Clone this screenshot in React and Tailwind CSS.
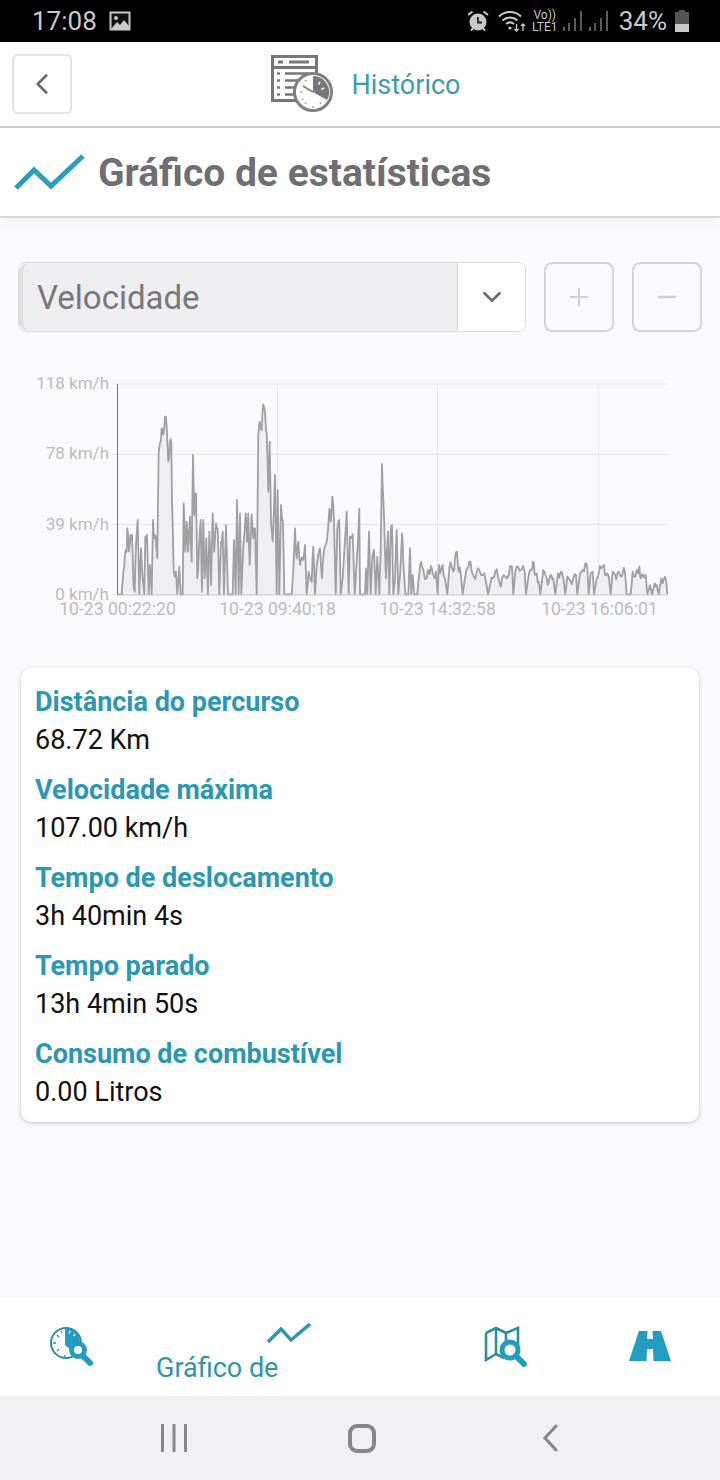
import React from "react";
import { ChevronLeft, ChevronDown, Plus, Minus } from "lucide-react";

const font = { fontFamily: "Roboto, sans-serif" };

// speed trace, read off the picture: x, y in crop pixels (3x)
const LEFT = [
  352,688,365,688,370,620,375,565,380,560,382,490,387,560,392,510,396,510,400,650,404,680,408,540,413,465,418,688,423,550,428,640,433,688,436,515,441,510,446,688,450,600,455,688,459,465,463,520,467,515,472,580,476,260,480,235,485,190,490,210,495,155,500,185,505,290,510,230,514,230,516,420,518,480,521,620,528,620,532,688,538,605,542,688,548,688,551,415,556,560,560,470,564,560,570,455,575,590,579,270,583,450,588,385,592,640,597,550,602,465,606,680,610,465,614,640,619,520,624,688,628,500,633,660,638,445,643,560,648,475,653,490,658,688,663,530,668,500,672,688,678,480,684,688,698,688,702,525,707,688,711,405,716,688,720,445,724,688,730,545,737,445,741,530,745,445,749,600,755,448,760,520,765,490,770,688,775,210,779,170,785,195,790,118,795,140,800,205,805,380,809,230,813,470,818,530,825,330,830,688,833,375,838,688,843,420,849,470,853,688,875,688,880,615,885,490,890,580,895,530,900,600,910,585,915,540,920,688,926,620,935,650,940,545,945,688,950,600,960,550,966,640,972,555,980,530,988,432,992,470,997,395,1002,470,1007,688,1012,490,1018,465,1022,688,1028,640,1040,440,1046,688,1050,515,1058,508,1064,688,1070,590,1078,432,1080,688,
];
const RIGHT = [
  5,688,15,688,18,610,22,688,27,500,32,688,37,575,42,555,47,688,52,575,58,688,62,560,66,297,70,400,75,560,78,640,84,500,88,688,92,500,96,480,100,688,105,640,110,495,115,688,120,630,126,505,130,590,136,688,145,688,150,550,154,688,158,630,163,688,172,688,176,640,180,605,186,605,190,615,200,640,205,615,210,625,215,610,220,630,228,620,233,688,236,605,240,625,248,600,255,640,262,688,268,610,275,605,280,620,285,580,291,560,296,620,302,625,308,688,315,640,322,610,328,590,335,620,342,635,350,620,358,615,368,630,378,650,384,688,392,650,398,640,406,620,414,635,420,660,426,640,436,635,446,630,456,605,460,688,466,620,474,605,484,615,494,620,498,688,506,630,514,615,519,590,524,630,530,625,536,650,541,688,547,640,553,620,560,640,566,650,574,630,580,640,586,688,594,625,602,620,610,640,616,688,622,635,630,645,640,640,648,630,652,688,660,625,668,615,676,595,682,610,686,688,692,625,698,620,702,688,710,640,716,625,724,610,732,600,738,630,746,635,752,688,758,620,766,630,772,625,780,630,788,625,795,622,800,688,812,688,818,620,826,635,834,625,838,605,844,640,850,630,857,630,862,688,870,660,876,688,884,655,890,660,896,688,904,640,912,640,918,645,922,688,
];

function tracePoints() {
  const raw = [];
  for (let i = 0; i < LEFT.length; i += 2) raw.push([LEFT[i] / 3, 365 + LEFT[i + 1] / 3]);
  for (let i = 0; i < RIGHT.length; i += 2) raw.push([360 + RIGHT[i] / 3, 365 + RIGHT[i + 1] / 3]);
  const out = [];
  raw.forEach((p, i) => {
    out.push(p);
    const next = raw[i + 1];
    // the real series is denser than what can be read by eye: add a jagged in-between sample
    if (next && p[1] < 594 && next[1] < 594) {
      const jitter = ((i * 7) % 5) - 2;
      out.push([(p[0] + next[0]) / 2, Math.min(594, (p[1] + next[1]) / 2 + jitter * 2.5)]);
    }
  });
  return out.map((p) => `${p[0].toFixed(1)},${p[1].toFixed(1)}`).join(" ");
}

const STATS = [
  ["Distância do percurso", "68.72 Km"],
  ["Velocidade máxima", "107.00 km/h"],
  ["Tempo de deslocamento", "3h 40min 4s"],
  ["Tempo parado", "13h 4min 50s"],
  ["Consumo de combustível", "0.00 Litros"],
];

function StatusBar() {
  return (
    <div className="h-[42px] bg-black flex items-center pl-[32px] pr-[31px] text-[#c9c9c9] shrink-0">
      <span className="text-[26px] leading-none">17:08</span>
      <svg width="22" height="20" viewBox="0 0 22 20" className="ml-[12px]">
        <rect x="0.5" y="0.5" width="21" height="19" fill="#c9c9c9" />
        <rect x="2.5" y="2.5" width="17" height="15" fill="#111" />
        <circle cx="7" cy="7" r="2" fill="#c9c9c9" />
        <path d="M2 18 L8 11 L11 14 L15 9 L20 15 V18 Z" fill="#c9c9c9" />
      </svg>
      <div className="flex-1" />
      {/* alarm */}
      <svg width="24" height="24" viewBox="0 0 24 24">
        <circle cx="12" cy="13" r="8.5" fill="#c9c9c9" />
        <path d="M12 8 V13.5 H16" stroke="#222" strokeWidth="1.8" fill="none" />
        <path d="M2 6 L6.5 2.5 M22 6 L17.5 2.5 M5 21.5 L7 19.5 M19 21.5 L17 19.5" stroke="#c9c9c9" strokeWidth="2" />
      </svg>
      {/* wifi */}
      <svg width="28" height="24" viewBox="0 0 28 24" className="ml-[8px]" fill="none" stroke="#c9c9c9">
        <path d="M1 7.5 C7 1.5 17 1.5 23 7.5" strokeWidth="2" />
        <path d="M4.5 11.5 C9 7.5 15 7.5 19.5 11.5" strokeWidth="2" />
        <path d="M8 15 C10.5 13 13.5 13 16 15" strokeWidth="2" />
        <circle cx="12" cy="19" r="1.6" fill="#c9c9c9" stroke="none" />
        <path d="M18.5 15 V22 M16.5 20 L18.5 22 L20.5 20 M25 22 V15 M23 17 L25 15 L27 17" strokeWidth="1.4" />
      </svg>
      <div className="ml-[6px] w-[26px] flex flex-col items-center text-[#c9c9c9] leading-none">
        <span className="text-[12px] leading-[12px]">Vo))</span>
        <span className="text-[12px] leading-[12px]">LTE1</span>
      </div>
      <svg width="46" height="22" viewBox="0 0 46 22" className="ml-[4px]" fill="#5c5c5c">
        <rect x="1" y="17" width="2" height="4" />
        <rect x="6" y="13" width="2" height="8" />
        <rect x="12" y="8" width="2" height="13" />
        <rect x="18" y="1" width="2" height="20" />
        <rect x="27" y="17" width="2" height="4" />
        <rect x="32" y="13" width="2" height="8" />
        <rect x="38" y="8" width="2" height="13" />
        <rect x="44" y="1" width="2" height="20" />
      </svg>
      <span className="ml-[11px] text-[26px] leading-none">34%</span>
      <svg width="14" height="22" viewBox="0 0 14 22" className="ml-[8px]">
        <rect x="4" y="0" width="6" height="2" fill="#555" />
        <rect x="0" y="2" width="14" height="20" fill="#555" />
        <rect x="0" y="14" width="14" height="8" fill="#c9c9c9" />
      </svg>
    </div>
  );
}

function HistoryIcon() {
  return (
    <svg width="62" height="58" viewBox="0 0 62 58">
      <rect x="1.5" y="1.5" width="44" height="44" fill="#fff" stroke="#77777b" strokeWidth="3" />
      <rect x="1.5" y="1.5" width="44" height="11" fill="#fff" stroke="#77777b" strokeWidth="3" />
      <path d="M7 7 H12 M18 7 H38" stroke="#77777b" strokeWidth="3" />
      <path d="M6 18.5 H9 M14 18.5 H38 M6 25.5 H9 M14 25.5 H34 M6 32.5 H9 M14 32.5 H30 M6 39.5 H9 M14 39.5 H26" stroke="#77777b" strokeWidth="2.6" />
      <circle cx="42" cy="37" r="18.5" fill="#fff" stroke="#808084" strokeWidth="3" />
      <path d="M42 21 A16 16 0 0 1 56 45 L42 37 Z" fill="#77777b" />
      <path d="M49 27 L47.5 29.5 M53 33 L50.5 34.5" stroke="#fff" strokeWidth="1.5" />
      <path d="M42 37 L32 31" stroke="#808084" strokeWidth="2" />
      <path d="M29 37 H31 M42 51 V53 M34 49 L35 47.5 M50 49 L49 47.5 M31 45 L32.5 44 M34 25 L35 26.5" stroke="#a0a0a2" strokeWidth="1.5" />
    </svg>
  );
}

function SpeedChart() {
  const points = tracePoints();
  return (
    <svg width="720" height="262" viewBox="0 365 720 262" className="block">
      {[384, 454.5, 524.5, 594.5].map((y) => (
        <line key={y} x1="112" x2="668" y1={y} y2={y} stroke="#e8e8ea" strokeWidth="1" />
      ))}
      {[277.5, 437.5, 598.5].map((x) => (
        <line key={x} x1={x} x2={x} y1="384" y2="595" stroke="#e6e6e8" strokeWidth="1" />
      ))}
      <polygon points={`117,595 ${points} 668,595`} fill="#efeff1" />
      <polyline points={points} fill="none" stroke="#a0a0a2" strokeWidth="1.8" strokeLinejoin="round" />
      <line x1="117.5" x2="117.5" y1="384" y2="595" stroke="#77777b" strokeWidth="1" />
      <line x1="117" x2="668" y1="595" y2="595" stroke="#c4c4c6" strokeWidth="1" />
      <g fill="#bcbcbe" fontSize="17" textAnchor="end" style={font}>
        <text x="109" y="389">118 km/h</text>
        <text x="109" y="459">78 km/h</text>
        <text x="109" y="530">39 km/h</text>
        <text x="109" y="600">0 km/h</text>
      </g>
      <g fill="#bcbcbe" fontSize="17.6" textAnchor="middle" style={font}>
        <text x="117.5" y="615">10-23 00:22:20</text>
        <text x="277.5" y="615">10-23 09:40:18</text>
        <text x="437.5" y="615">10-23 14:32:58</text>
        <text x="599.5" y="615">10-23 16:06:01</text>
      </g>
    </svg>
  );
}

function BottomNav() {
  return (
    <div className="h-[98px] bg-white flex shrink-0">
      <div className="w-[142px] flex justify-center pt-[29px]">
        <svg width="44" height="40" viewBox="0 0 44 40">
          <circle cx="17" cy="16" r="15" fill="#fff" stroke="#2a8f9f" strokeWidth="2" />
          <path d="M16 1 A15 15 0 0 1 31 13 L28 28 L16 18 Z" fill="#229cc0" />
          <path d="M21 4 L20 6.5 M26 7 L24.5 9" stroke="#fff" strokeWidth="1.3" />
          <path d="M4 16 H7 M16 28 V31 M8 8 L10 10 M8 24 L10 22 M12 4 L13 6" stroke="#2a8f9f" strokeWidth="1.3" />
          <circle cx="29" cy="23" r="6.5" fill="#fff" stroke="#229cc0" strokeWidth="5" />
          <path d="M34 29 L41 36" stroke="#229cc0" strokeWidth="6" strokeLinecap="round" />
        </svg>
      </div>
      <div className="w-[290px] flex flex-col pt-[24px]">
        <svg width="44" height="22" viewBox="0 0 44 22" className="self-center ml-[3px]">
          <polyline points="1,20 14,7 24,18 43,2" fill="none" stroke="#2a97b3" strokeWidth="3.4" />
        </svg>
        <span className="ml-[14px] mt-[9px] text-[27px] leading-[30px] text-[#2f95ad] whitespace-nowrap">Gráfico de</span>
      </div>
      <div className="w-[148px] flex justify-center pt-[28px]">
        <svg width="44" height="42" viewBox="0 0 44 42">
          <path d="M2 7 L12 2 L22 7 L34 2 V20 M12 2 V28 M22 7 V16 M2 7 V34 L12 28 L20 32" fill="none" stroke="#2a8f9f" strokeWidth="2.6" />
          <circle cx="26" cy="24" r="8" fill="#fff" stroke="#229cc0" strokeWidth="5" />
          <path d="M32 30 L40 38" stroke="#229cc0" strokeWidth="6" strokeLinecap="round" />
        </svg>
      </div>
      <div className="flex-1 flex justify-center pt-[33px]">
        <svg width="42" height="30" viewBox="0 0 42 30">
          <path d="M10 0 H32 L42 30 H0 Z" fill="#229cc0" />
          <path d="M18.5 0 H23.5 L24 8 H18 Z M18 18 H24 L24.5 30 H17.5 Z" fill="#fff" />
        </svg>
      </div>
    </div>
  );
}

export default function App() {
  return (
    <div className="w-[720px] h-[1480px] flex flex-col bg-[#fafafc] overflow-hidden" style={font}>
      <StatusBar />

      {/* top bar */}
      <div className="relative h-[86px] bg-white border-b-2 border-[#cfcfd1] flex items-center justify-center shrink-0">
        <button className="absolute left-[12px] top-[12px] w-[60px] h-[60px] rounded-[6px] border-2 border-[#e3e3e5] flex items-center justify-center">
          <ChevronLeft size={34} strokeWidth={1.9} className="text-[#6d6d71]" />
        </button>
        <div className="flex items-center ml-[11px]">
          <HistoryIcon />
          <span className="ml-[19px] mt-[3px] text-[27px] text-[#3a9cb0]">Histórico</span>
        </div>
      </div>

      {/* page title */}
      <div className="h-[90px] bg-white border-b-2 border-[#d8d8da] flex items-center pl-[14px] shrink-0 shadow-[0_6px_12px_rgba(0,0,0,0.03)]">
        <svg width="72" height="38" viewBox="0 0 72 38">
          <polyline points="2,35 20,17 37,33 69,3" fill="none" stroke="#2a9dbf" strokeWidth="5" />
        </svg>
        <span className="ml-[12px] mt-[2px] text-[39px] leading-[46px] font-bold text-[#6f6f73] whitespace-nowrap">Gráfico de estatísticas</span>
      </div>

      <div className="flex-1 flex flex-col">
        {/* selector row */}
        <div className="flex mt-[44px] ml-[18px] gap-[18px]">
          <div className="w-[508px] h-[70px] flex rounded-[8px] border border-[#dcdcde] overflow-hidden">
            <div className="w-[438px] bg-[#eeeef0] border-l-4 border-[#dedee0] rounded-l-[10px] flex items-center pl-[14px] pt-[1px] text-[33px] text-[#78777b]">
              Velocidade
            </div>
            <div className="flex-1 bg-white border-l border-[#dcdcde] flex items-center justify-center">
              <ChevronDown size={30} strokeWidth={2.2} className="text-[#6d6d71]" />
            </div>
          </div>
          <button className="w-[70px] h-[70px] rounded-[8px] border-2 border-[#d4d4d6] flex items-center justify-center">
            <Plus size={28} strokeWidth={1.8} className="text-[#d0d0d2]" />
          </button>
          <button className="w-[70px] h-[70px] rounded-[8px] border-2 border-[#d4d4d6] flex items-center justify-center">
            <Minus size={28} strokeWidth={2} className="text-[#d0d0d2]" />
          </button>
        </div>

        <div className="mt-[33px]">
          <SpeedChart />
        </div>

        {/* stats card */}
        <div className="ml-[21px] mt-[41px] w-[678px] h-[454px] bg-white rounded-[10px] shadow-[0_1px_4px_rgba(0,0,0,0.22)] pl-[14px] pt-[16px]">
          {STATS.map(([label, value]) => (
            <div key={label} className="h-[88px]">
              <div className="text-[27px] leading-[37px] font-bold text-[#2c97b3] whitespace-nowrap">{label}</div>
              <div className="text-[27px] leading-[38px] text-[#111]">{value}</div>
            </div>
          ))}
        </div>
      </div>

      <BottomNav />

      {/* android navigation */}
      <div className="h-[84px] bg-[#f0f0f2] flex shrink-0">
        <div className="w-[348px] flex justify-center items-center">
          <svg width="28" height="28" viewBox="0 0 28 28">
            <path d="M2.5 1 V27 M14 1 V27 M25.5 1 V27" stroke="#85858a" strokeWidth="3" strokeLinecap="round" />
          </svg>
        </div>
        <div className="w-[28px] flex items-center">
          <div className="w-[28px] h-[29px] rounded-[9px] border-[4px] border-[#85858a]" />
        </div>
        <div className="ml-[166px] flex items-center">
          <svg width="16" height="28" viewBox="0 0 16 28">
            <path d="M14 2 L3 14 L14 26" fill="none" stroke="#85858a" strokeWidth="3" strokeLinecap="round" />
          </svg>
        </div>
      </div>
    </div>
  );
}
